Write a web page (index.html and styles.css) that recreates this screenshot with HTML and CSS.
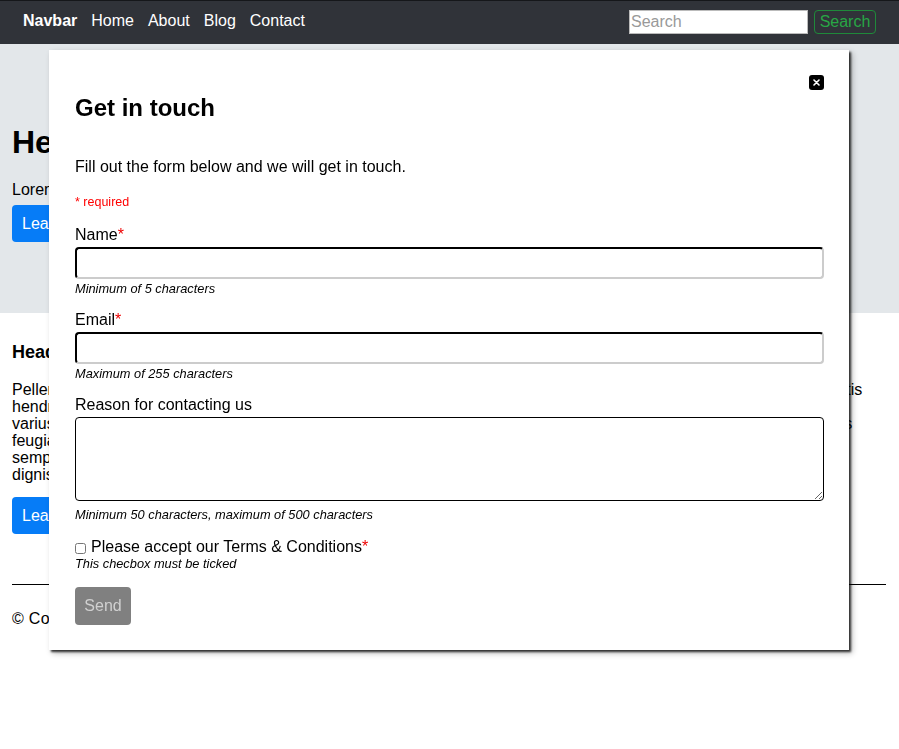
FILE: index.html
```html
<!DOCTYPE html>
<html lang="en">
<head>
<meta charset="utf-8">
<title>Get in touch</title>
<link rel="stylesheet" href="styles.css">
</head>
<body>
<nav class="navbar">
  <div class="nav-links">
    <a class="brand" href="#">Navbar</a>
    <a href="#">Home</a>
    <a href="#">About</a>
    <a href="#">Blog</a>
    <a href="#">Contact</a>
  </div>
  <form class="nav-search">
    <input class="search-input" type="text" placeholder="Search">
    <button class="search-btn" type="button">Search</button>
  </form>
</nav>

<header class="jumbo">
  <h1 class="jumbo-title">Hello, world!</h1>
  <p class="jumbo-text">Lorem ipsum dolor sit amet, consectetur adipiscing elit.</p>
  <button class="btn-blue" type="button">Learn more</button>
</header>

<main class="content">
  <h2 class="section-title">Heading</h2>
  <p class="section-text">Pellentesque habitant morbi tristique senectus et netus et malesuada fames ac turpis egestas. Nec libero mauris sagittis hendrerit leo, vel vestibulum sem volutpat et. Proin ut odio eget augue porta efficitur sed vel arcu nunc at lorem purus varius mauris non sapien ornare, sed euismod nisl pulvinar. Vivamus sit amet tortor nec lectus nunc bibendum rhoncus feugiat id magna. Integer vitae ligula in urna consectetur aliquet at a nisl. Maecenas ac felis ornare, nibh tempor nunc semper mi eget, ultricies nibh. Sed nec risus et nisl pretium tempor ac ut nisi. Curabitur interdum arcu in augue nisl dignissim, non iaculis orci tempus.</p>
  <button class="btn-blue" type="button">Learn more</button>
  <hr class="rule">
  <footer class="footer">© Copyright 2021</footer>
</main>

<div class="modal" role="dialog">
  <div class="modal-head">
    <button class="close-btn" type="button" aria-label="Close">
      <svg width="7" height="7" viewBox="0 0 7 7"><path d="M1 1L6 6M6 1L1 6" stroke="#fff" stroke-width="1.6" stroke-linecap="round"/></svg>
    </button>
  </div>
  <h2 class="modal-title">Get in touch</h2>
  <p class="modal-intro">Fill out the form below and we will get in touch.</p>
  <p class="req-note">* required</p>

  <div class="field">
    <label class="field-label">Name<span class="star">*</span></label>
    <input class="text-input" type="text">
    <small class="hint">Minimum of 5 characters</small>
  </div>
  <div class="field">
    <label class="field-label">Email<span class="star">*</span></label>
    <input class="text-input" type="text">
    <small class="hint">Maximum of 255 characters</small>
  </div>
  <div class="field">
    <label class="field-label">Reason for contacting us</label>
    <textarea class="text-area"></textarea>
    <small class="hint">Minimum 50 characters, maximum of 500 characters</small>
  </div>
  <div class="check-field">
    <label class="check-label"><input class="check" type="checkbox"> Please accept our Terms &amp; Conditions<span class="star">*</span></label>
    <small class="hint">This checbox must be ticked</small>
  </div>
  <button class="send-btn" type="button">Send</button>
</div>
</body>
</html>
```

FILE: styles.css
```css
* { box-sizing: border-box; }
html, body { margin: 0; padding: 0; }
body {
  font-family: "Liberation Sans", Arial, sans-serif;
  font-size: 16px;
  color: #000;
  background: #fff;
}

.navbar {
  height: 44px;
  background: #303339;
  border-top: 1px solid #15171a;
  display: flex;
  align-items: center;
  justify-content: space-between;
  padding: 0 23px 0 23px;
}
.nav-links { display: flex; gap: 14px; align-items: center; margin-top: -4px; }
.nav-links a { color: #fff; text-decoration: none; font-size: 16px; }
.nav-links .brand { font-weight: bold; margin-right: 0; }
.nav-search { display: flex; align-items: center; gap: 6px; margin: -2px 0 0; }
.search-input {
  width: 179px; height: 24px;
  border: 1px solid #bbb;
  font-family: inherit; font-size: 16px;
  padding: 0 1px;
  background: #fff;
}
.search-input::placeholder { color: #999; }
.search-btn {
  height: 24px; width: 62px;
  background: transparent;
  border: 1px solid #1f8a3a;
  border-radius: 4px;
  color: #28a745;
  font-family: inherit; font-size: 16px;
  padding: 0;
}

.jumbo {
  background: #e3e7ea;
  padding: 79px 12px 71px;
}
.jumbo-title { margin: 0 0 20px; font-size: 32px; line-height: 38px; font-weight: bold; }
.jumbo-text { margin: 0 0 6px; line-height: 18px; }
.btn-blue {
  height: 37px;
  padding: 0 10px;
  background: #067cf7;
  color: #fff;
  border: 0;
  border-radius: 4px;
  font-family: inherit; font-size: 16px;
}

.content { padding: 28px 13px 0 12px; }
.section-title { margin: 0 0 18px; font-size: 18px; line-height: 22px; font-weight: bold; }
.section-text { margin: 0 0 14px; line-height: 17px; }
.rule { border: 0; border-top: 1px solid #000; margin: 50px 0 25px; }
.footer { font-size: 16px; letter-spacing: 0.3px; }

.modal {
  position: fixed;
  left: 49px; top: 50px;
  width: 800px; height: 600px;
  background: #fff;
  padding: 25px 25px 0 26px;
  box-shadow: 2px 2px 2px rgba(0,0,0,0.75), 3px 3px 6px rgba(0,0,0,0.3);
}
.modal-head { display: flex; justify-content: flex-end; height: 15px; }
.close-btn {
  width: 15px; height: 15px;
  background: #000;
  border: 0; border-radius: 3px;
  padding: 0;
  display: flex; align-items: center; justify-content: center;
}
.modal-title { margin: 4px 0 0; font-size: 24px; line-height: 28px; font-weight: bold; }
.modal-intro { margin: 36px 0 0; line-height: 18px; }
.req-note { margin: 19px 0 0; color: #f00; font-size: 12.5px; line-height: 14px; }
.field { display: flex; flex-direction: column; margin-top: 17px; }
.field + .field { margin-top: 15px; }
.field-label { line-height: 18px; margin-bottom: 3px; }
.star { color: #e00; }
.text-input {
  height: 32px;
  width: 100%;
  border: 2px inset #ccc;
  border-top-color: #222; border-left-color: #222;
  border-right-color: #ccc; border-bottom-color: #ccc;
  border-radius: 4px;
  font-family: inherit; font-size: 16px;
}
.text-area {
  height: 84px; width: 100%;
  border: 1px solid #000;
  border-radius: 4px;
  font-family: inherit; font-size: 16px;
}
.hint { font-size: 12.8px; font-style: italic; line-height: 14px; margin-top: 3px; }
.field .text-area + .hint { margin-top: 7px; }
.check-field { display: flex; flex-direction: column; margin-top: 16px; }
.check-label { line-height: 18px; display: flex; align-items: center; }
.check { width: 11px; height: 11px; margin: 3px 5px 0 0; }
.check-field .hint { margin-top: 1px; }
.send-btn {
  margin-top: 16px;
  width: 56px; height: 38px;
  background: #808080;
  color: #d0d0d0;
  border: 0; border-radius: 4px;
  font-family: inherit; font-size: 16px;
}
```
